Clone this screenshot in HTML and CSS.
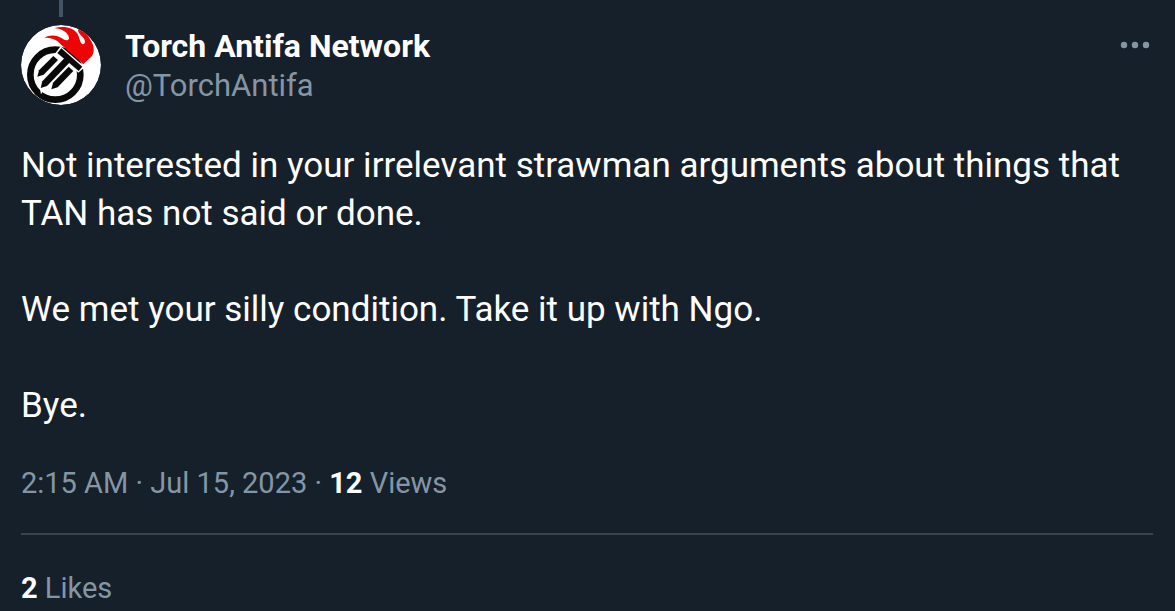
FILE: index.html
```html
<!DOCTYPE html>
<html lang="en">
<head>
<meta charset="utf-8">
<title>Torch Antifa Network</title>
<link rel="stylesheet" href="styles.css">
</head>
<body>
<article class="post">
  <div class="thread-line"></div>
  <header class="header">
    <svg class="avatar" viewBox="0 0 240 240" role="img" aria-label="Torch Antifa Network avatar">
      <circle cx="120" cy="120" r="120" fill="#fff"/>
      <circle cx="103" cy="149" r="75" fill="none" stroke="#090909" stroke-width="20"/>
      <path d="M119 64 192 126 172 143 103 85Z" fill="#fff"/>
      <path d="M121 70 184 125 173 138 109 84Z" fill="#090909"/>
      <path d="M97 93 111 105 68 149 49 155 54 136Z" fill="#090909"/>
      <path d="M55 180 72 190 60 208Z" fill="#fff"/>
      <path d="M133 97 148 110 78 183 59 189 64 169Z" fill="#090909"/>
      <path d="M143 125 157 138 110 187 91 193 96 173Z" fill="#090909"/>
      <path d="M187 118 117 56C108 43 90 38 70 38 87 28 108 30 123 40 132 48 144 48 144 38 142 23 123 11 100 9 132 1 156 9 168 24 174 33 177 48 180 54 189 63 195 54 190 43 186 35 171 27 171 13 189 18 201 30 207 43 219 60 222 78 213 93Z" fill="#ed0505"/>
    </svg>
    <div class="identity">
      <a class="name" href="#">Torch Antifa Network</a>
      <a class="handle" href="#">@TorchAntifa</a>
    </div>
    <button class="more" aria-label="More">
      <svg class="dots" viewBox="0 0 30 8"><circle cx="4" cy="4" r="3.200"/><circle cx="15" cy="4" r="3.200"/><circle cx="26" cy="4" r="3.200"/></svg>
    </button>
  </header>
  <div class="body">
    <p>Not interested in your irrelevant strawman arguments about things that TAN has not said or done.</p>
    <p>We met your silly condition. Take it up with Ngo.</p>
    <p>Bye.</p>
  </div>
  <div class="meta"><time datetime="2023-07-15T02:15">2:15 AM · Jul 15, 2023</time> · <strong>12</strong> Views</div>
  <footer class="stats"><strong>2</strong> Likes</footer>
</article>
</body>
</html>
```
FILE: styles.css
```css
body {
  margin: 0;
  background: #16202a;
  color: #fff;
  font-family: Roboto, "Noto Sans", sans-serif;
  font-size: 29px;
  line-height: 40px;
}
.post { padding: 0 22px 0 21px; }
.thread-line {
  width: 4px;
  height: 17px;
  margin-left: 38px;
  background: #425364;
}
.header {
  display: flex;
  align-items: flex-start;
  margin-top: 8px;
}
.avatar { width: 80px; height: 80px; border-radius: 50%; }
.identity {
  display: flex;
  flex: 1;
  flex-direction: column;
  align-items: flex-start;
  margin-left: 24px;
  padding-top: 1px;
}
.name, .handle { text-decoration: none; }
.name { color: #fff; font-size: 32px; font-weight: 700; }
.handle { color: #8496a5; font-size: 31px; }
.more {
  display: flex;
  padding: 16px 3px;
  border: 0;
  background: none;
  cursor: pointer;
}
.dots { width: 30px; height: 8px; fill: #8496a5; }
.body { margin-top: 36px; font-size: 35px; line-height: 48px; }
.body p { margin: 0 0 48px; }
.body p:last-child { margin-bottom: 0; }
.meta {
  margin-top: 33px;
  padding-bottom: 30px;
  border-bottom: 2px solid #38444d;
  color: #8496a5;
}
.stats { margin-top: 33px; color: #8496a5; }
strong { color: #fff; font-weight: 700; }
```
